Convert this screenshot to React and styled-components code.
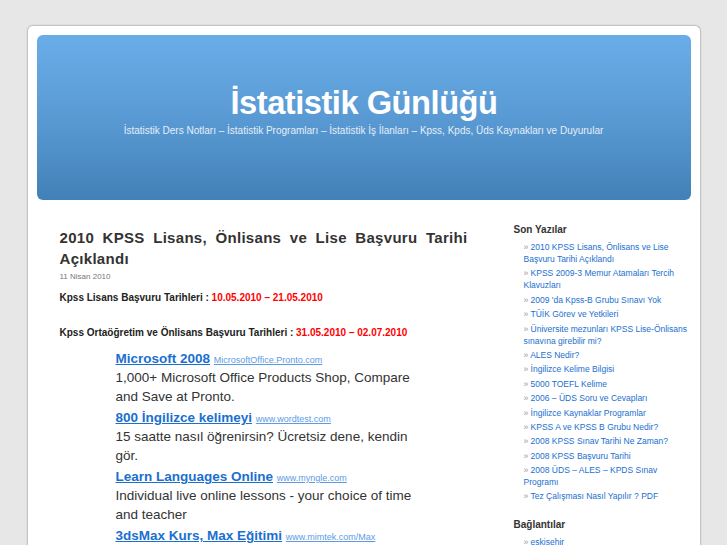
import React from "react";
import styled, { createGlobalStyle } from "styled-components";

const GlobalStyle = createGlobalStyle`
  body {
    margin: 0;
    background: #e7e7e7;
    font-family: "Liberation Sans", Arial, sans-serif;
  }
`;

const recent = [
  "2010 KPSS Lisans, Önlisans ve Lise Başvuru Tarihi Açıklandı",
  "KPSS 2009-3 Memur Atamaları Tercih Klavuzları",
  "2009 'da Kpss-B Grubu Sınavı Yok",
  "TÜİK Görev ve Yetkileri",
  "Üniversite mezunları KPSS Lise-Önlisans sınavına girebilir mi?",
  "ALES Nedir?",
  "İngilizce Kelime Bilgisi",
  "5000 TOEFL Kelime",
  "2006 – ÜDS Soru ve Cevapları",
  "İngilizce Kaynaklar Programlar",
  "KPSS A ve KPSS B Grubu Nedir?",
  "2008 KPSS Sınav Tarihi Ne Zaman?",
  "2008 KPSS Başvuru Tarihi",
  "2008 ÜDS – ALES – KPDS Sınav Programı",
  "Tez Çalışması Nasıl Yapılır ? PDF",
];

const ads = [
  {
    title: "Microsoft 2008",
    url: "MicrosoftOffice.Pronto.com",
    text: "1,000+ Microsoft Office Products Shop, Compare and Save at Pronto.",
  },
  {
    title: "800 İngilizce kelimeyi",
    url: "www.wordtest.com",
    text: "15 saatte nasıl öğrenirsin? Ücretsiz dene, kendin gör.",
  },
  {
    title: "Learn Languages Online",
    url: "www.myngle.com",
    text: "Individual live online lessons - your choice of time and teacher",
  },
  {
    title: "3dsMax Kurs, Max Eğitimi",
    url: "www.mimtek.com/Max",
    text: "",
  },
];

const App = () => {
  return (
    <>
      <GlobalStyle />
      <StyledPage>
        <Header>
          <h1>İstatistik Günlüğü</h1>
          <p>
            İstatistik Ders Notları – İstatistik Programları – İstatistik İş
            İlanları – Kpss, Kpds, Üds Kaynakları ve Duyurular
          </p>
        </Header>
        <Body>
          <Content>
            <h2>2010 KPSS Lisans, Önlisans ve Lise Başvuru Tarihi Açıklandı</h2>
            <small>11 Nisan 2010</small>
            <DateLine>
              Kpss Lisans Başvuru Tarihleri : <span>10.05.2010 – 21.05.2010</span>
            </DateLine>
            <DateLine $gap>
              Kpss Ortaöğretim ve Önlisans Başvuru Tarihleri :{" "}
              <span>31.05.2010 – 02.07.2010</span>
            </DateLine>
            <Ads>
              {ads.map((ad) => (
                <div className="ad" key={ad.title}>
                  <a className="adTitle" href="#">
                    {ad.title}
                  </a>{" "}
                  <a className="adUrl" href="#">
                    {ad.url}
                  </a>
                  {ad.text && <div className="adText">{ad.text}</div>}
                </div>
              ))}
            </Ads>
          </Content>
          <Sidebar>
            <h3>Son Yazılar</h3>
            <ul>
              {recent.map((item) => (
                <li key={item}>
                  <a href="#">{item}</a>
                </li>
              ))}
            </ul>
            <h3>Bağlantılar</h3>
            <ul>
              <li>
                <a href="#">eskisehir</a>
              </li>
            </ul>
          </Sidebar>
        </Body>
      </StyledPage>
    </>
  );
};

const StyledPage = styled.div`
  width: 654px;
  margin: 25px auto 0;
  padding: 9px 9px 0;
  background: #fff;
  border: 1px solid #c4c4c4;
  border-bottom: none;
  border-radius: 6px 6px 0 0;
  box-shadow: 0 0 2px rgba(0, 0, 0, 0.12);
`;

const Header = styled.div`
  height: 165px;
  border-radius: 6px;
  background: linear-gradient(#69ade8, #5a9ad4 50%, #4281b7);
  color: #fff;
  text-align: center;
  display: flex;
  flex-direction: column;
  padding-top: 46px;
  box-sizing: border-box;
  h1 {
    margin: 0;
    font-size: 34px;
    font-weight: bold;
    letter-spacing: -0.5px;
    line-height: 42px;
    transform: scaleX(0.96);
  }
  p {
    margin: 2px 0 0;
    font-size: 10px;
    color: #e4eef8;
  }
`;

const Body = styled.div`
  display: flex;
  padding: 27px 0 0 23px;
`;

const Content = styled.div`
  width: 408px;
  h2 {
    margin: 0;
    font-size: 15px;
    line-height: 21px;
    font-weight: bold;
    color: #333;
    text-align: justify;
    letter-spacing: 0.3px;
  }
  small {
    display: block;
    font-size: 8px;
    color: #777;
    margin-top: 3px;
  }
`;

const DateLine = styled.p`
  margin: ${(p) => (p.$gap ? "24px" : "11px")} 0 0;
  font-size: 10px;
  font-weight: bold;
  color: #222;
  span {
    color: #f00;
  }
`;

const Ads = styled.div`
  margin: 11px 0 0 56px;
  width: 300px;
  font-size: 13.5px;
  line-height: 19px;
  color: #333;
  .ad {
    margin-bottom: 2px;
  }
  .adTitle {
    color: #1a6fcf;
    font-weight: bold;
  }
  .adUrl {
    color: #5d9be3;
    font-size: 9px;
    line-height: 1;
  }
`;

const Sidebar = styled.div`
  margin-left: 46px;
  margin-top: -6px;
  width: 174px;
  h3 {
    margin: 0;
    font-size: 10px;
    font-weight: bold;
    color: #333;
    line-height: 14px;
    margin-top: 2px;
  }
  ul {
    list-style: none;
    margin: 4px 0 16px 10px;
    padding: 0;
  }
  li {
    font-size: 8.5px;
    line-height: 12px;
    margin-bottom: 2.4px;
    &:before {
      content: "» ";
      color: #999;
    }
  }
  a {
    color: #1a6fcf;
    text-decoration: none;
  }
`;

export default App;
